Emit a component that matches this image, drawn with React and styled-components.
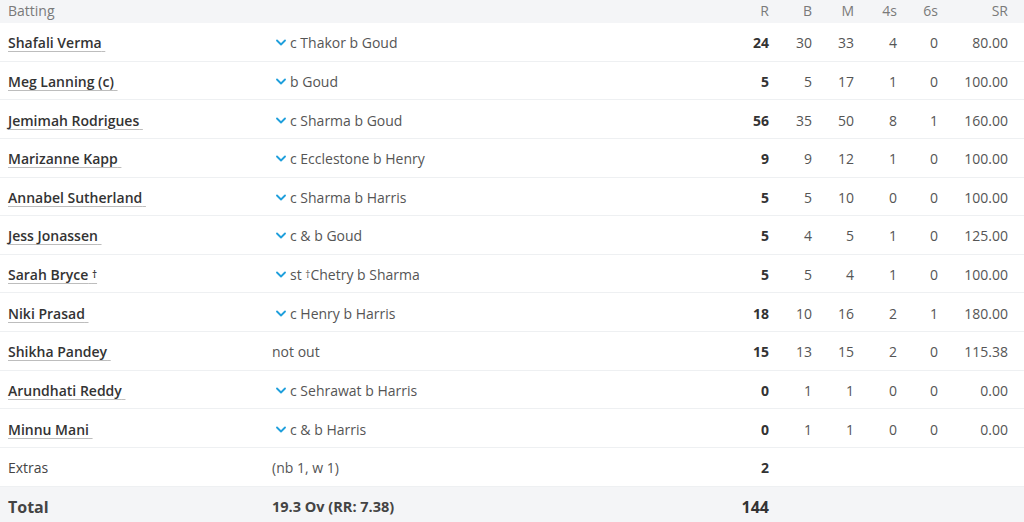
import React from "react";
import styled, { createGlobalStyle } from "styled-components";

const Global = createGlobalStyle`
  html, body { margin: 0; padding: 0; background: #fff; }
  body { font-family: "Open Sans", "Noto Sans", sans-serif; }
`;

const cols = "264px 1fr 42px 43px 42px 43px 41px 70px";

const Table = styled.div`
  width: 1024px;
  display: flex;
  flex-direction: column;
`;

const Row = styled.div`
  display: grid;
  grid-template-columns: ${cols};
  padding-right: 16px;
  padding-top: ${(p) => p.$pt || "0"};
  padding-bottom: ${(p) => p.$pb || "0"};
  align-items: center;
  box-sizing: border-box;
  height: ${(p) => p.$h};
  background: ${(p) => (p.$shade ? "#f4f5f7" : "#fff")};
  border-bottom: ${(p) => (p.$line ? "1px solid #eef0f2" : "none")};
`;

const HeadCell = styled.div`
  font-size: 14px;
  color: #7a7a7a;
  text-align: ${(p) => (p.$right ? "right" : "left")};
  padding-left: ${(p) => (p.$first ? "8px" : "0")};
  white-space: nowrap;
`;

const NameCell = styled.div`
  padding-left: 8px;
  font-size: 14px;
  white-space: nowrap;
`;

const Name = styled.span`
  font-weight: 600;
  color: #333;
  text-decoration: underline;
  text-decoration-color: #bdbdbd;
  text-underline-offset: 3px;
  text-decoration-thickness: 1px;
`;

const Plain = styled.span`
  color: #444;
  font-weight: ${(p) => (p.$bold ? 700 : 400)};
  font-size: ${(p) => p.$size || "14px"};
`;

const Dagger = styled.span`
  font-size: 10px;
  vertical-align: 2px;
`;

const DisCell = styled.div`
  display: flex;
  align-items: center;
  gap: 4px;
  font-size: 14px;
  color: #555;
  white-space: nowrap;
  padding-left: ${(p) => (p.$indent ? "8px" : "12px")};
`;

const Num = styled.div`
  text-align: right;
  font-size: ${(p) => p.$size || "14px"};
  font-weight: ${(p) => (p.$bold ? 700 : 400)};
  color: ${(p) => (p.$bold ? "#333" : "#555")};
`;

const Chevron = () => (
  <svg width="10" height="7" viewBox="0 0 10 7" fill="none">
    <polyline points="1,1.5 5,5.5 9,1.5" stroke="#1f9fdc" strokeWidth="1.8" strokeLinecap="round" strokeLinejoin="round" />
  </svg>
);

const data = [
  ["Shafali Verma", "c Thakor b Goud", 24, 30, 33, 4, 0, "80.00"],
  ["Meg Lanning (c)", "b Goud", 5, 5, 17, 1, 0, "100.00"],
  ["Jemimah Rodrigues", "c Sharma b Goud", 56, 35, 50, 8, 1, "160.00"],
  ["Marizanne Kapp", "c Ecclestone b Henry", 9, 9, 12, 1, 0, "100.00"],
  ["Annabel Sutherland", "c Sharma b Harris", 5, 5, 10, 0, 0, "100.00"],
  ["Jess Jonassen", "c & b Goud", 5, 4, 5, 1, 0, "125.00"],
  ["Sarah Bryce", "st Chetry b Sharma", 5, 5, 4, 1, 0, "100.00", true],
  ["Niki Prasad", "c Henry b Harris", 18, 10, 16, 2, 1, "180.00"],
  ["Shikha Pandey", "not out", 15, 13, 15, 2, 0, "115.38"],
  ["Arundhati Reddy", "c Sehrawat b Harris", 0, 1, 1, 0, 0, "0.00"],
  ["Minnu Mani", "c & b Harris", 0, 1, 1, 0, 0, "0.00"],
];

const H = "38.64px";

export default function App() {
  return (
    <>
      <Global />
      <Table>
        <Row $h="23px" $pb="2px" $shade>
          <HeadCell $first>Batting</HeadCell>
          <HeadCell />
          <HeadCell $right>R</HeadCell>
          <HeadCell $right>B</HeadCell>
          <HeadCell $right>M</HeadCell>
          <HeadCell $right>4s</HeadCell>
          <HeadCell $right>6s</HeadCell>
          <HeadCell $right>SR</HeadCell>
        </Row>
        {data.map((d) => {
          const notOut = d[1] === "not out";
          return (
            <Row key={d[0]} $h={H} $pt="2px" $line>
              <NameCell>
                {d[8] ? (
                  <Name>
                    {d[0]} <Dagger>†</Dagger>
                  </Name>
                ) : (
                  <Name>{d[0]}{"\u00a0"}</Name>
                )}
              </NameCell>
              <DisCell $indent={notOut}>
                {!notOut && <Chevron />}
                {d[8] ? (
                  <span>
                    st <Dagger>†</Dagger>Chetry b Sharma
                  </span>
                ) : (
                  <span>{d[1]}</span>
                )}
              </DisCell>
              <Num $bold>{d[2]}</Num>
              <Num>{d[3]}</Num>
              <Num>{d[4]}</Num>
              <Num>{d[5]}</Num>
              <Num>{d[6]}</Num>
              <Num>{d[7]}</Num>
            </Row>
          );
        })}
        <Row $h={H} $pt="2px" $line>
          <NameCell>
            <Plain>Extras</Plain>
          </NameCell>
          <DisCell $indent>(nb 1, w 1)</DisCell>
          <Num $bold>2</Num>
        </Row>
        <Row $h="35px" $pt="5px" $shade>
          <NameCell>
            <Plain $bold $size="16px">Total</Plain>
          </NameCell>
          <DisCell $indent>
            <Plain $bold $size="14.5px">19.3 Ov (RR: 7.38)</Plain>
          </DisCell>
          <Num $bold $size="16px">144</Num>
        </Row>
      </Table>
    </>
  );
}
